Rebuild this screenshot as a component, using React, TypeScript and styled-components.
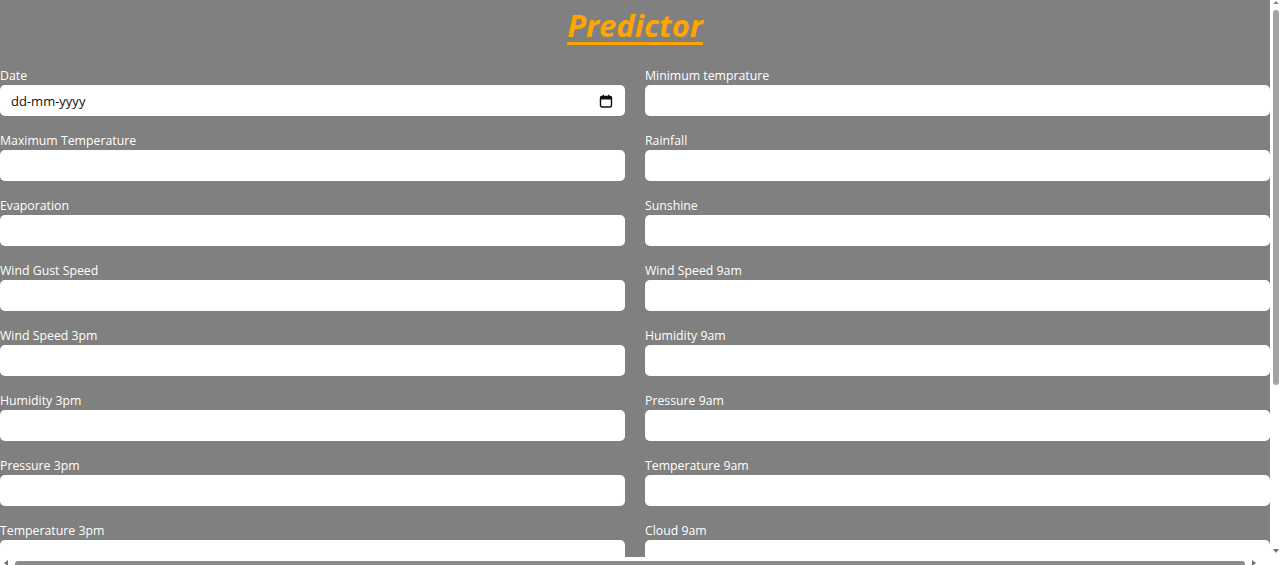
import React from "react";
import styled, { createGlobalStyle } from "styled-components";

const GlobalStyle = createGlobalStyle`
  html, body {
    margin: 0;
    background: #808080;
    overflow: hidden;
  }
  body {
    font-family: "Open Sans", "Noto Sans", sans-serif;
  }
`;

const Frame = styled.div`
  display: grid;
  grid-template-columns: 1270px 10px;
  grid-template-rows: 557px 8px;
  width: 1280px;
  height: 565px;
  overflow: hidden;
`;

const Viewport = styled.div`
  overflow: hidden;
  background: #808080;
`;

const VScroll = styled.div`
  display: flex;
  flex-direction: column;
  align-items: center;
  background: #ffffff;
  padding: 1px 0 4px 1px;
  box-sizing: border-box;
`;

const VThumb = styled.div`
  width: 6px;
  height: 375px;
  margin-top: 6px;
  border-radius: 3px;
  background: #a3a3a3;
`;

const Arrow = styled.div<{ $dir: "up" | "down" | "left" | "right" }>`
  width: 0;
  height: 0;
  border-style: solid;
  border-color: transparent;
  ${({ $dir }) =>
    $dir === "up"
      ? "border-width: 0 3px 3px 3px; border-bottom-color: #8a8a8a;"
      : $dir === "down"
      ? "border-width: 4px 3.5px 0 3.5px; border-top-color: #707070;"
      : $dir === "left"
      ? "border-width: 3.5px 4px 3.5px 0; border-right-color: #707070;"
      : "border-width: 3.5px 0 3.5px 4px; border-left-color: #707070;"}
`;

const VSpacer = styled.div`
  flex: 1;
`;

const HScroll = styled.div`
  display: flex;
  align-items: flex-end;
  background: #ffffff;
  padding: 0 14px 0 4px;
`;

const HArrowBox = styled.div`
  height: 8px;
  display: flex;
  align-items: center;
  padding-top: 4px;
  box-sizing: border-box;
`;

const HThumb = styled.div`
  flex: 0 0 1230px;
  height: 4px;
  margin-left: 7px;
  border-radius: 3px 3px 0 0;
  background: #8c8c8c;
`;

const HSpacer = styled.div`
  flex: 1;
`;

const Corner = styled.div`
  background: #ffffff;
`;

const Main = styled.main`
  width: 1270px;
`;

const Title = styled.h1`
  margin: 0;
  padding: 5px 0 23px;
  text-align: center;
  font-size: 31px;
  line-height: 41px;
  font-weight: 700;
  font-style: italic;
  color: #ffa500;
  text-decoration: underline;
  text-decoration-thickness: 3px;
  text-underline-offset: 5px;
`;

const Form = styled.form`
  display: grid;
  grid-template-columns: 1fr 1fr;
  column-gap: 20px;
  row-gap: 18px;
`;

const Field = styled.div`
  display: flex;
  flex-direction: column;
`;

const Label = styled.label`
  color: #ffffff;
  font-size: 12.3px;
  line-height: 16px;
  padding-bottom: 1px;
  margin-top: -1px;
`;

const InputWrap = styled.div`
  position: relative;
`;

const Input = styled.input`
  box-sizing: border-box;
  width: 100%;
  height: 31px;
  border: none;
  border-radius: 5px;
  background: #ffffff;
  padding: 0 11px;
  font-family: inherit;
  font-size: 13px;
  color: #111;
  outline: none;
  &::placeholder {
    color: #111;
  }
`;

const CalendarIcon = styled.svg`
  position: absolute;
  right: 12px;
  top: 9px;
  width: 14px;
  height: 14px;
  pointer-events: none;
`;

const fields: string[] = [
  "Date",
  "Minimum temprature",
  "Maximum Temperature",
  "Rainfall",
  "Evaporation",
  "Sunshine",
  "Wind Gust Speed",
  "Wind Speed 9am",
  "Wind Speed 3pm",
  "Humidity 9am",
  "Humidity 3pm",
  "Pressure 9am",
  "Pressure 3pm",
  "Temperature 9am",
  "Temperature 3pm",
  "Cloud 9am",
];

export default function App() {
  return (
    <Frame>
      <GlobalStyle />
      <Viewport>
        <Main>
          <Title>Predictor</Title>
          <Form onSubmit={(e) => e.preventDefault()}>
            {fields.map((f) => (
              <Field key={f}>
                <Label>{f}</Label>
                {f === "Date" ? (
                  <InputWrap>
                    <Input type="text" placeholder="dd-mm-yyyy" />
                    <CalendarIcon viewBox="0 0 14 14">
                      <rect x="1.5" y="2.5" width="11" height="10.5" rx="1.5" fill="none" stroke="#111" strokeWidth="1.4" />
                      <rect x="1.5" y="2.5" width="11" height="3" fill="#111" />
                      <rect x="3.6" y="0.8" width="1.4" height="2.5" fill="#111" />
                      <rect x="9" y="0.8" width="1.4" height="2.5" fill="#111" />
                    </CalendarIcon>
                  </InputWrap>
                ) : (
                  <Input type="text" />
                )}
              </Field>
            ))}
          </Form>
        </Main>
      </Viewport>
      <VScroll>
        <Arrow $dir="up" />
        <VThumb />
        <VSpacer />
        <Arrow $dir="down" />
      </VScroll>
      <HScroll>
        <HArrowBox>
          <Arrow $dir="left" />
        </HArrowBox>
        <HThumb />
        <HSpacer />
        <HArrowBox>
          <Arrow $dir="right" />
        </HArrowBox>
      </HScroll>
      <Corner />
    </Frame>
  );
}
